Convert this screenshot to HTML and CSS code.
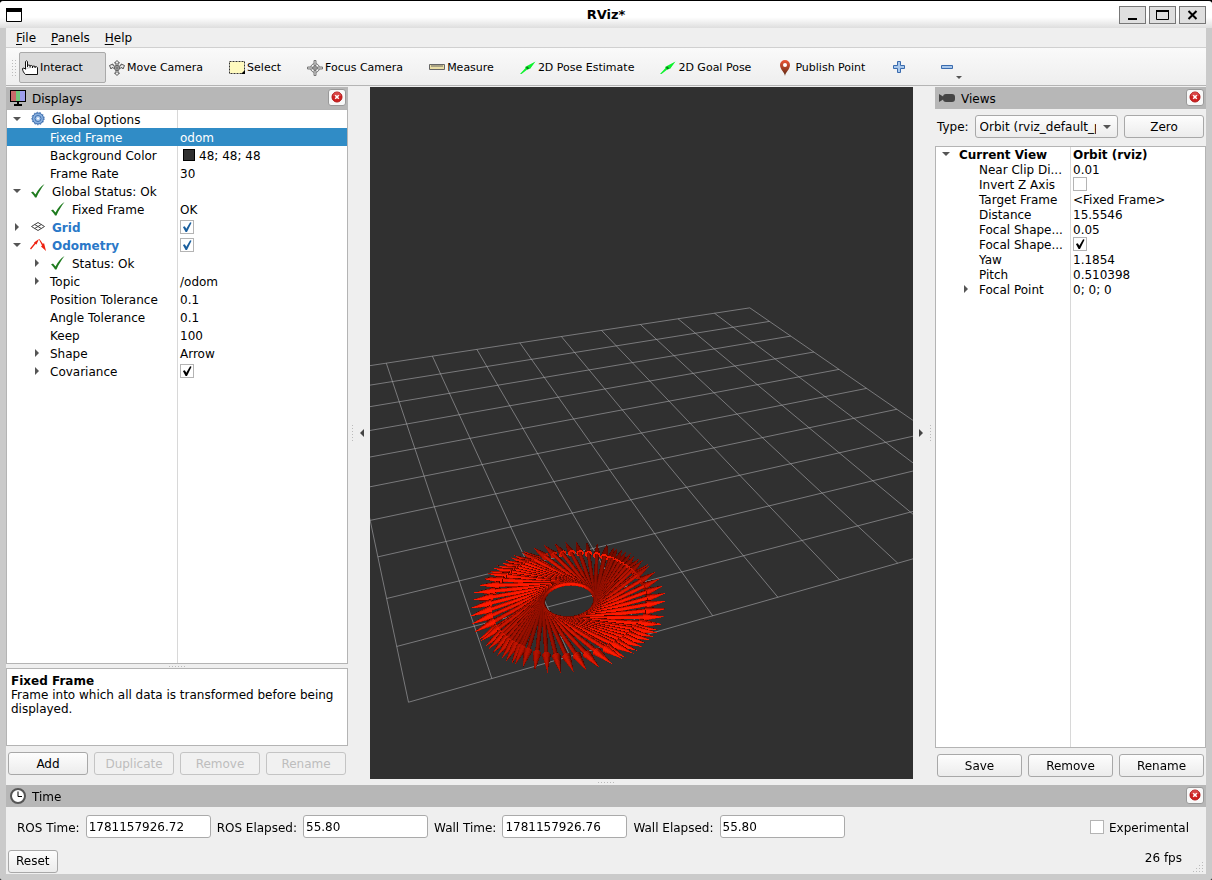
FILE: index.html
```html
<!DOCTYPE html>
<html lang="en">
<head>
    <meta charset="utf-8">
    <title>RViz*</title>
    <link rel="stylesheet" href="styles.css">
</head>
<body>
<svg class="defs" width="0" height="0">
    <symbol id="i-check" viewBox="0 0 16 16">
        <path d="M1 9.500 3 8.500 5.500 11.500C8 7 10.500 3.500 14.500 1 11.500 5 8.500 9.500 6.500 14.500H5C4 12.500 2.500 10.500 1 9.500Z" fill="#1e7b1e"/>
    </symbol>
    <symbol id="i-close" viewBox="0 0 12 12">
        <circle cx="6" cy="6" r="5" fill="#cf2020" stroke="#b01414"/>
        <path d="M2 5a4 4 0 0 1 8 0Z" fill="#e06060" opacity=".6"/>
        <path d="M4.200 4.200 7.800 7.800M7.800 4.200 4.200 7.800" stroke="#fff" stroke-width="1.500"/>
    </symbol>
    <symbol id="i-arrow" viewBox="0 0 16 16">
        <path d="M0 14 5.500 8 5 7 15.500 1.500 10 9 8.500 8.500 1.500 14Z" fill="#0cf22c"/>
        <path d="M6.500 7 8.500 9" stroke="#0a7a1c" stroke-width="2"/>
    </symbol>
</svg>

<div class="window">
    <header class="titlebar">
        <svg class="app-icon" width="16" height="14" viewBox="0 0 16 14"><path d="M.5.5h15v13H.5z" fill="#fff" stroke="#000"/><path d="M0 0h16v4H0z"/></svg>
        <h1>RViz*</h1>
        <div class="window-buttons">
            <button aria-label="Minimize"><svg width="15" height="12"><path d="M3 10h9" stroke="#000" stroke-width="2"/></svg></button>
            <button aria-label="Maximize"><svg width="15" height="12"><path d="M1.500 1.500h12v9h-12z" fill="none" stroke="#000"/><path d="M1 2h13" stroke="#000" stroke-width="2"/></svg></button>
            <button aria-label="Close"><svg width="15" height="12"><path d="M3.500 2 11.500 10M11.500 2 3.500 10" stroke="#000" stroke-width="2"/></svg></button>
        </div>
    </header>

    <div class="client">
        <nav class="menubar">
            <button><u>F</u>ile</button>
            <button><u>P</u>anels</button>
            <button><u>H</u>elp</button>
        </nav>

        <div class="toolbar">
            <span class="grip"></span>
            <button class="tool active">
                <svg width="16" height="16" viewBox="0 0 16 16"><path d="M3.500 9V1.500Q4.500 0 5.500 1.500V6.500M5.500 7V5.500Q7 4.500 8 5.500V7.500M8 6Q9.500 5 10.500 6V8M10.500 6.500Q12 5.500 13 6.500V8M13 7Q14.500 6 15.500 7.500V14.500H3.500C2 13 .5 11 .5 8.500Q2 7 3.500 9.500" fill="#fff" stroke="#111"/></svg>
                Interact
            </button>
            <button class="tool">
                <svg width="16" height="16" viewBox="0 0 16 16" fill="#eee" stroke="#555"><path d="M8 .5 10.500 3H9v3H7V3H5.500ZM8 15.500 5.500 13H7v-3h2v3h1.500ZM.5 5.500 4 4v1.500l2.500 1-1 2L3 7.500 2 9ZM15.500 5.500 12 4v1.500l-2.500 1 1 2 2.500-1L14 9Z"/><circle cx="8" cy="8" r="2.500"/><path d="M8 6v4M6 8h4" fill="none"/></svg>
                Move Camera
            </button>
            <button class="tool">
                <svg width="16" height="16" viewBox="0 0 16 16"><path d="M.5 1.500h15v12H.5z" fill="#fffabf" stroke="#333" stroke-dasharray="2 1"/><path d="M16 10v4h-4Z"/></svg>
                Select
            </button>
            <button class="tool">
                <svg width="16" height="16" viewBox="0 0 16 16" fill="none" stroke="#777"><circle cx="8" cy="8" r="4.500"/><circle cx="8" cy="8" r="2"/><path d="M7 .5h2v5H7zM7 10.500h2v5H7zM.5 7h5v2h-5zM10.500 7h5v2h-5z" fill="#ddd"/><path d="M8 6v4M6 8h4"/></svg>
                Focus Camera
            </button>
            <button class="tool">
                <svg width="16" height="16" viewBox="0 0 16 16"><path d="M.5 4.500h15v5H.5z" fill="#ebdfa6" stroke="#666"/><path d="M3 5v2M5 5v2M7 5v2M9 5v2M11 5v2M13 5v2" stroke="#666"/></svg>
                Measure
            </button>
            <button class="tool"><svg width="16" height="16"><use href="#i-arrow"/></svg>2D Pose Estimate</button>
            <button class="tool"><svg width="16" height="16"><use href="#i-arrow"/></svg>2D Goal Pose</button>
            <button class="tool">
                <svg width="16" height="16" viewBox="0 0 16 16">
                    <linearGradient id="pin" x2="0" y2="1"><stop offset="0" stop-color="#ee5535"/><stop offset="1" stop-color="#5c2b15"/></linearGradient>
                    <path d="M8 16C7.500 12 3 9.500 3 5a5 5 0 0 1 10 0C13 9.500 8.500 12 8 16Z" fill="url(#pin)"/><circle cx="8" cy="5" r="2" fill="#fff"/>
                </svg>
                Publish Point
            </button>
            <button class="tool icon-only" aria-label="Add tool">
                <svg width="16" height="16" viewBox="0 0 16 16"><path d="M6.500 1.500h3v4h4v3h-4v4h-3v-4h-4v-3h4z" fill="#a9c8ec" stroke="#3a6bae"/></svg>
            </button>
            <button class="tool icon-only" aria-label="Remove tool">
                <svg width="16" height="16" viewBox="0 0 16 16"><path d="M2.500 5.500h11v3h-11z" fill="#a9c8ec" stroke="#3a6bae"/></svg>
                <span class="tool-menu"></span>
            </button>
        </div>

        <main class="main">
            <section class="dock displays">
                <div class="dock-title">
                    <svg width="16" height="16" viewBox="0 0 16 16">
                        <path d="M0 0h16v12H0z"/><path d="M1 1h5v10H1z" fill="#c66a6a"/><path d="M6 1h4v10H6z" fill="#6fc77c"/><path d="M10 1h5v10h-5z" fill="#9d9dec"/><path d="M7 12h2v2H7zM4 14h8v2H4z"/>
                    </svg>
                    <h2>Displays</h2>
                    <button class="dock-close" aria-label="Close Displays"><svg width="12" height="12"><use href="#i-close"/></svg></button>
                </div>
                <div class="tree">
                    <table>
                        <tr class="top"><td><i class="exp open"></i><svg width="16" height="16" viewBox="0 0 16 16"><circle cx="8" cy="7.500" r="5.500" fill="#87aedd" stroke="#3d6fb0"/><circle cx="8" cy="7.500" r="6.200" fill="none" stroke="#3d6fb0" stroke-dasharray="1.500 1.500"/><circle cx="8" cy="7.500" r="3" fill="#a9c8ec" stroke="#3d6fb0"/><circle cx="8" cy="7.500" r="1" fill="#fff"/></svg>Global Options</td><td></td></tr>
                        <tr class="selected"><td><i class="exp"></i>Fixed Frame</td><td>odom</td></tr>
                        <tr><td><i class="exp"></i>Background Color</td><td><span class="swatch"></span>48; 48; 48</td></tr>
                        <tr><td><i class="exp"></i>Frame Rate</td><td>30</td></tr>
                        <tr class="top"><td><i class="exp open"></i><svg width="16" height="16"><use href="#i-check"/></svg>Global Status: Ok</td><td></td></tr>
                        <tr><td><i class="exp"></i><svg width="16" height="16"><use href="#i-check"/></svg>Fixed Frame</td><td>OK</td></tr>
                        <tr class="top display"><td><i class="exp closed"></i><svg width="16" height="16" viewBox="0 0 16 16"><path d="M1.500 7.500 8 3.500 14.500 7.500 8 11.500ZM4.700 5.500 11.300 9.500M11.300 5.500 4.700 9.500" fill="none" stroke="#444"/></svg>Grid</td><td><input type="checkbox" aria-label="Grid" checked></td></tr>
                        <tr class="top display"><td><i class="exp open"></i><svg width="16" height="16" viewBox="0 0 16 16"><path d="M0 11.500 4.500 6 4 5.500 9 2 6.500 7.500 5.500 7 1 12.500ZM9 2.500 9.500 2 13 7 14 6 16 14 11 9.500 12 8.500Z" fill="#ee2211"/></svg>Odometry</td><td><input type="checkbox" aria-label="Odometry" checked></td></tr>
                        <tr><td><i class="exp closed"></i><svg width="16" height="16"><use href="#i-check"/></svg>Status: Ok</td><td></td></tr>
                        <tr><td><i class="exp closed"></i>Topic</td><td>/odom</td></tr>
                        <tr><td><i class="exp"></i>Position Tolerance</td><td>0.1</td></tr>
                        <tr><td><i class="exp"></i>Angle Tolerance</td><td>0.1</td></tr>
                        <tr><td><i class="exp"></i>Keep</td><td>100</td></tr>
                        <tr><td><i class="exp closed"></i>Shape</td><td>Arrow</td></tr>
                        <tr><td><i class="exp closed"></i>Covariance</td><td><input type="checkbox" aria-label="Covariance" checked></td></tr>
                    </table>
                </div>
                <div class="splitter"></div>
                <div class="description">
                    <b>Fixed Frame</b>
                    <p>Frame into which all data is transformed before being displayed.</p>
                </div>
                <div class="dock-buttons">
                    <button class="btn">Add</button>
                    <button class="btn" disabled>Duplicate</button>
                    <button class="btn" disabled>Remove</button>
                    <button class="btn" disabled>Rename</button>
                </div>
            </section>

            <div class="gutter"><span class="dots"></span><i class="tri left"></i></div>
            <canvas id="view" class="view"></canvas>
            <div class="gutter end"><i class="tri right"></i><span class="dots"></span></div>

            <section class="dock views">
                <div class="dock-title">
                    <svg width="16" height="16" viewBox="0 0 16 16"><path d="M0 4 5 7V9L0 12Z" fill="#444"/><rect x="4" y="4" width="12" height="8" rx="3" fill="#444"/></svg>
                    <h2>Views</h2>
                    <button class="dock-close" aria-label="Close Views"><svg width="12" height="12"><use href="#i-close"/></svg></button>
                </div>
                <div class="type-row">
                    <label for="viewType">Type:</label>
                    <div class="combo">
                        <select id="viewType" class="btn"><option>Orbit (rviz_default_plugins)</option></select>
                    </div>
                    <button class="btn zero">Zero</button>
                </div>
                <div class="tree">
                    <table>
                        <tr class="top current"><td><i class="exp open"></i>Current View</td><td>Orbit (rviz)</td></tr>
                        <tr><td><i class="exp"></i>Near Clip Di...</td><td>0.01</td></tr>
                        <tr><td><i class="exp"></i>Invert Z Axis</td><td><input type="checkbox" aria-label="Invert Z Axis"></td></tr>
                        <tr><td><i class="exp"></i>Target Frame</td><td>&lt;Fixed Frame&gt;</td></tr>
                        <tr><td><i class="exp"></i>Distance</td><td>15.5546</td></tr>
                        <tr><td><i class="exp"></i>Focal Shape...</td><td>0.05</td></tr>
                        <tr><td><i class="exp"></i>Focal Shape...</td><td><input type="checkbox" aria-label="Focal Shape Fixed Size" checked></td></tr>
                        <tr><td><i class="exp"></i>Yaw</td><td>1.1854</td></tr>
                        <tr><td><i class="exp"></i>Pitch</td><td>0.510398</td></tr>
                        <tr><td><i class="exp closed"></i>Focal Point</td><td>0; 0; 0</td></tr>
                    </table>
                </div>
                <div class="dock-buttons">
                    <button class="btn">Save</button>
                    <button class="btn">Remove</button>
                    <button class="btn">Rename</button>
                </div>
            </section>
        </main>
        <div class="splitter"></div>

        <section class="time">
            <div class="dock-title">
                <svg width="16" height="16" viewBox="0 0 16 16"><circle cx="8" cy="8" r="7" fill="#fff" stroke="#555" stroke-width="2"/><path d="M8 3.500V8.500H12" fill="none" stroke="#000"/></svg>
                <h2>Time</h2>
                <button class="dock-close" aria-label="Close Time"><svg width="12" height="12"><use href="#i-close"/></svg></button>
            </div>
            <div class="time-row">
                <label for="rosTime">ROS Time:</label>
                <input type="text" id="rosTime" value="1781157926.72" readonly>
                <label for="rosElapsed">ROS Elapsed:</label>
                <input type="text" id="rosElapsed" value="55.80" readonly>
                <label for="wallTime">Wall Time:</label>
                <input type="text" id="wallTime" value="1781157926.76" readonly>
                <label for="wallElapsed">Wall Elapsed:</label>
                <input type="text" id="wallElapsed" value="55.80" readonly>
                <span class="experimental">
                    <input type="checkbox" id="experimental">
                    <label for="experimental">Experimental</label>
                </span>
            </div>
        </section>
        <footer class="statusbar">
            <button class="btn reset">Reset</button>
            <span class="fps">26 fps</span>
            <svg class="size-grip" width="12" height="12" fill="#bbb"><path d="M9 0h1v1H9zM6 3h1v1H6zM9 3h1v1H9zM3 6h1v1H3zM6 6h1v1H6zM9 6h1v1H9zM0 9h1v1H0zM3 9h1v1H3zM6 9h1v1H6zM9 9h1v1H9z"/></svg>
        </footer>
    </div>
</div>
<script src="script.js"></script>
</body>
</html>
```

FILE: styles.css
```css
* {
    box-sizing: border-box;
}
body {
    margin: 0;
    background: #000;
    color: #000;
    font: 12px/14px "DejaVu Sans", sans-serif;
}
h1, h2, p {
    margin: 0;
}
button, input, select {
    font: inherit;
    color: inherit;
    margin: 0;
}
svg {
    flex: none;
}
.defs {
    position: absolute;
}

/* window frame */
.window {
    display: flex;
    flex-direction: column;
    height: 100vh;
    padding: 0 6px 6px;
    background: #cacaca;
    border-top: 1px solid #000;
    border-radius: 4px 4px 2px 2px;
    overflow: hidden;
}
.titlebar {
    display: grid;
    grid-template-columns: 1fr auto 1fr;
    align-items: center;
    flex: none;
    height: 27px;
    margin: 0 -6px;
    padding: 0 6px;
    background: linear-gradient(#fff 60%, #dedede);
}
.titlebar h1 {
    font-size: 13px;
    font-weight: bold;
}
.window-buttons {
    display: flex;
    justify-content: flex-end;
    gap: 3px;
}
.window-buttons button {
    display: flex;
    align-items: center;
    justify-content: center;
    width: 27px;
    height: 18px;
    padding: 0;
    background: #dfdfdf;
    border: 1px solid #777;
}
.client {
    display: flex;
    flex-direction: column;
    flex: 1;
    min-height: 0;
    background: #efefef;
}

/* menu and tools */
.menubar {
    display: flex;
    flex: none;
    gap: 15px;
    height: 20px;
    padding: 0 10px;
    border-bottom: 1px solid #d0d0d0;
}
.menubar button {
    padding: 0;
    border: 0;
    background: none;
}
.menubar u {
    text-underline-offset: 2px;
}
.toolbar {
    display: flex;
    align-items: center;
    flex: none;
    height: 38px;
    padding: 1px 5px 0;
    background: linear-gradient(#fafafa, #eee);
    border-bottom: 1px solid #b4b4b4;
}
.grip {
    width: 5px;
    height: 17px;
    margin-right: 3px;
    background: radial-gradient(circle, #bbb 1px, transparent 1px) 0 0 / 3px 3px;
}
.tool {
    position: relative;
    display: flex;
    align-items: center;
    gap: 2px;
    flex: none;
    height: 31px;
    padding: 2px 22px 0 2px;
    border: 1px solid transparent;
    border-radius: 2px;
    background: none;
    font-size: 11px;
}
.tool.active {
    background: #dadada;
    border-color: #aaa;
}
.tool.icon-only {
    padding-right: 28px;
}
.tool-menu {
    position: absolute;
    left: 19px;
    bottom: 3px;
    border: 3px solid transparent;
    border-top-color: #555;
    border-bottom: 0;
}

/* docks */
.main {
    display: flex;
    flex: 1;
    min-height: 0;
    margin-top: 1px;
}
.dock {
    display: flex;
    flex-direction: column;
    flex: none;
}
.displays {
    width: 342px;
    padding-bottom: 4px;
}
.views {
    width: 271px;
    padding-bottom: 2px;
}
.dock-title {
    display: flex;
    align-items: center;
    gap: 6px;
    flex: none;
    height: 22px;
    padding: 0 2px 0 4px;
    background: #b7b7b7;
}
.dock-title h2 {
    flex: 1;
    padding-top: 2px;
    font-size: 12px;
    font-weight: normal;
}
.dock-close {
    display: flex;
    align-items: center;
    justify-content: center;
    width: 18px;
    height: 17px;
    margin-bottom: 2px;
    padding: 0;
    background: #f8f8f8;
    border: 1px solid #999;
    border-radius: 3px;
}
.btn {
    height: 23px;
    padding: 0 4px;
    background: linear-gradient(#fdfdfd, #ececec);
    border: 1px solid #a8a8a8;
    border-radius: 3px;
}
.btn:disabled {
    border-color: #c4c4c4;
    color: #bdbdbd;
    background: #f1f1f1;
}
.dock-buttons {
    display: flex;
    gap: 6px;
    padding: 6px 2px 0;
}
.dock-buttons .btn {
    flex: 1;
}

/* property trees */
.tree {
    flex: 1;
    min-height: 0;
    overflow: hidden;
    background: linear-gradient(#d8d8d8, #d8d8d8) no-repeat 170px 0 / 1px 100% #fff;
    border: 1px solid #b4b4b4;
}
.tree table {
    width: 100%;
    table-layout: fixed;
    border-collapse: collapse;
}
.tree td {
    height: 18px;
    padding: 2px 0 0 2px;
    white-space: nowrap;
}
.tree td:first-child {
    width: 171px;
    padding-left: 23px;
}
.tree .top td:first-child {
    padding-left: 3px;
}
.tree td > * {
    margin-top: -3px;
    vertical-align: middle;
}
.tree td > svg {
    margin-right: 6px;
}
.tree .selected {
    background: #308cc6;
    color: #fff;
}
.tree .display td:first-child {
    color: #2a78c8;
    font-weight: bold;
}
.tree .current {
    font-weight: bold;
}
.exp {
    display: inline-flex;
    align-items: center;
    justify-content: center;
    width: 14px;
    height: 14px;
    margin-right: 6px;
}
.exp::before {
    content: "";
    border: 4px solid transparent;
}
.exp.open::before {
    border-top-color: #555;
    border-bottom: 0;
}
.exp.closed::before {
    border-left-color: #555;
    border-right: 0;
}
.swatch {
    display: inline-block;
    width: 12px;
    height: 12px;
    margin: 0 4px 0 3px;
    background: #303030;
    border: 1px solid #000;
}
input[type="checkbox"] {
    appearance: none;
    display: inline-block;
    width: 14px;
    height: 14px;
    background: #fff;
    border: 1px solid #b4b4b4;
}
input[type="checkbox"]:checked::before {
    content: "";
    display: block;
    width: 12px;
    height: 12px;
    background: #000;
    clip-path: polygon(16% 50%, 32% 44%, 44% 64%, 76% 10%, 88% 14%, 50% 92%, 38% 92%);
}
.display input[type="checkbox"]:checked::before {
    background: #1a5f9e;
}
.views .tree {
    background-position: 134px 0;
}
.views .tree td {
    height: 15px;
    padding-top: 1px;
    line-height: 14px;
}
.views .tree td:first-child {
    width: 135px;
}

.splitter {
    flex: none;
    height: 4px;
    background: repeating-linear-gradient(90deg, #bbb 0 1px, transparent 1px 3px) center / 16px 1px no-repeat;
}
.client > .splitter {
    height: 6px;
}
.description {
    flex: none;
    height: 78px;
    padding: 5px 4px;
    background: #fff;
    border: 1px solid #b4b4b4;
}
.gutter {
    display: flex;
    align-items: center;
    justify-content: space-between;
    flex: none;
    width: 22px;
    padding: 0 6px 0 4px;
}
.gutter.end {
    padding: 0 4px 0 6px;
}
.gutter .dots {
    width: 1px;
    height: 16px;
    background: repeating-linear-gradient(#bbb 0 1px, transparent 1px 3px);
}
.tri {
    border: 4px solid transparent;
}
.tri.left {
    border-right-color: #444;
    border-left: 0;
}
.tri.right {
    border-left-color: #444;
    border-right: 0;
}
.view {
    display: block;
    flex: 1;
    width: 0;
    min-width: 0;
    height: 100%;
    background: #303030;
}
.type-row {
    display: flex;
    align-items: center;
    gap: 6px;
    padding: 6px 2px 8px;
}
.combo {
    position: relative;
    flex: 1;
    min-width: 0;
}
.combo::after {
    content: "";
    position: absolute;
    right: 7px;
    top: 10px;
    border: 4px solid transparent;
    border-top-color: #555;
    border-bottom: 0;
}
.combo select {
    display: block;
    appearance: none;
    width: 100%;
    padding: 0 21px 0 4px;
}
.zero {
    width: 80px;
}

/* time panel */
.time {
    flex: none;
}
.time-row {
    display: flex;
    align-items: center;
    gap: 6px;
    padding: 8px 17px 8px 11px;
}
.time-row label {
    padding-top: 2px;
}
.time-row input[type="text"] {
    width: 125px;
    height: 23px;
    padding: 0 2px;
    background: #fff;
    border: 1px solid #aaa;
    border-radius: 3px;
}
.experimental {
    display: flex;
    align-items: center;
    gap: 5px;
    margin-left: auto;
}
.statusbar {
    display: flex;
    align-items: center;
    flex: none;
    height: 28px;
    padding: 2px 1px 0 2px;
}
.reset {
    padding: 0 7px;
}
.fps {
    margin: 0 11px 6px auto;
}
.size-grip {
    align-self: flex-end;
}
```

FILE: script.js
```js
// orbit camera, same numbers as in the Views panel
const camera = { distance: 15.5546, yaw: 1.1854, pitch: 0.510398, fov: Math.PI / 4 };

const cy = Math.cos(camera.yaw), sy = Math.sin(camera.yaw);
const cp = Math.cos(camera.pitch), sp = Math.sin(camera.pitch);

const canvas = document.getElementById("view");
const ctx = canvas.getContext("2d");

// world -> screen x, screen y, depth
function project(p) {
    const right = -sy * p[0] + cy * p[1];
    const near = cy * p[0] + sy * p[1];
    const up = -sp * near + cp * p[2];
    const depth = camera.distance - cp * near - sp * p[2];
    const f = canvas.height / 2 / Math.tan(camera.fov / 2);
    return [canvas.width / 2 + f * right / depth, canvas.height / 2 - f * up / depth, depth];
}

function drawGrid() {
    ctx.strokeStyle = "rgba(170, 170, 174, 0.6)";
    ctx.lineWidth = 1;
    for (let i = -5; i <= 5; i++) {
        for (const [a, b] of [[[i, -5, 0], [i, 5, 0]], [[-5, i, 0], [5, i, 0]]]) {
            const p = project(a), q = project(b);
            ctx.beginPath();
            ctx.moveTo(p[0], p[1]);
            ctx.lineTo(q[0], q[1]);
            ctx.stroke();
        }
    }
}

// one triangle into the image, with a depth test
function fillTriangle(img, zbuf, a, b, c, color) {
    const area = (b[0] - a[0]) * (c[1] - a[1]) - (b[1] - a[1]) * (c[0] - a[0]);
    if (Math.abs(area) < 1e-6) return;
    const x0 = Math.max(0, Math.floor(Math.min(a[0], b[0], c[0])));
    const x1 = Math.min(img.width - 1, Math.ceil(Math.max(a[0], b[0], c[0])));
    const y0 = Math.max(0, Math.floor(Math.min(a[1], b[1], c[1])));
    const y1 = Math.min(img.height - 1, Math.ceil(Math.max(a[1], b[1], c[1])));
    for (let y = y0; y <= y1; y++) {
        for (let x = x0; x <= x1; x++) {
            const px = x + 0.5, py = y + 0.5;
            const u = ((b[0] - px) * (c[1] - py) - (b[1] - py) * (c[0] - px)) / area;
            const v = ((c[0] - px) * (a[1] - py) - (c[1] - py) * (a[0] - px)) / area;
            const w = 1 - u - v;
            if (u < 0 || v < 0 || w < 0) continue;
            const z = u * a[2] + v * b[2] + w * c[2];
            const i = y * img.width + x;
            if (z >= zbuf[i]) continue;
            zbuf[i] = z;
            img.data.set([color[0], color[1], color[2], 255], i * 4);
        }
    }
}

// the light sits behind the camera
function shade(n) {
    const light = Math.max(0, n[0] * cp * cy + n[1] * cp * sy + n[2] * sp);
    const k = Math.min(1, 0.25 + 0.4 * light + 0.5 * light * light);
    return [255 * k, 25 * k, 0];
}

function drawArrow(img, zbuf, x, y, heading) {
    const ch = Math.cos(heading), sh = Math.sin(heading);
    const sides = 20;
    const shaft = 0.028, head = 0.055;
    const point = (along, radius, t) => project([
        x + ch * along - sh * radius * Math.cos(t),
        y + sh * along + ch * radius * Math.cos(t),
        radius * Math.sin(t)
    ]);
    const normal = (slope, t) => {
        const l = Math.hypot(1, slope);
        return [(ch * slope - sh * Math.cos(t)) / l, (sh * slope + ch * Math.cos(t)) / l, Math.sin(t) / l];
    };
    for (let i = 0; i < sides; i++) {
        const t0 = i / sides * 2 * Math.PI, t1 = (i + 1) / sides * 2 * Math.PI, tm = (t0 + t1) / 2;
        // shaft
        const side = shade(normal(0, tm));
        const a = point(0, shaft, t0), b = point(0, shaft, t1);
        const c = point(1, shaft, t0), d = point(1, shaft, t1);
        fillTriangle(img, zbuf, a, b, c, side);
        fillTriangle(img, zbuf, b, d, c, side);
        // ends of the shaft and of the head
        const back = shade([-ch, -sh, 0]);
        fillTriangle(img, zbuf, point(0, 0, 0), a, b, back);
        fillTriangle(img, zbuf, point(1, 0, 0), point(1, head, t0), point(1, head, t1), back);
        // head
        fillTriangle(img, zbuf, point(1, head, t0), point(1, head, t1), point(1.3, 0, 0), shade(normal(head / 0.3, tm)));
    }
}

function drawOdometry() {
    const img = ctx.getImageData(0, 0, canvas.width, canvas.height);
    const zbuf = new Float32Array(canvas.width * canvas.height).fill(Infinity);
    const center = [2.687, 3.984], radius = 0.355, step = 2 * Math.PI / 52;
    for (let i = 0; i < 100; i++) {
        // the second lap drifts off the first one
        const drift = i < 52 ? 0 : step * 0.5 * Math.max(0, Math.sin(i * step * 4 - 1.4));
        const t = i * step + drift;
        drawArrow(img, zbuf, center[0] + radius * Math.cos(t), center[1] + radius * Math.sin(t), t + Math.PI / 2);
    }
    ctx.putImageData(img, 0, 0);
}

function render() {
    canvas.width = canvas.clientWidth;
    canvas.height = canvas.clientHeight;
    ctx.fillStyle = "#303030";
    ctx.fillRect(0, 0, canvas.width, canvas.height);
    drawGrid();
    drawOdometry();
}

render();
window.addEventListener("resize", render);
```
